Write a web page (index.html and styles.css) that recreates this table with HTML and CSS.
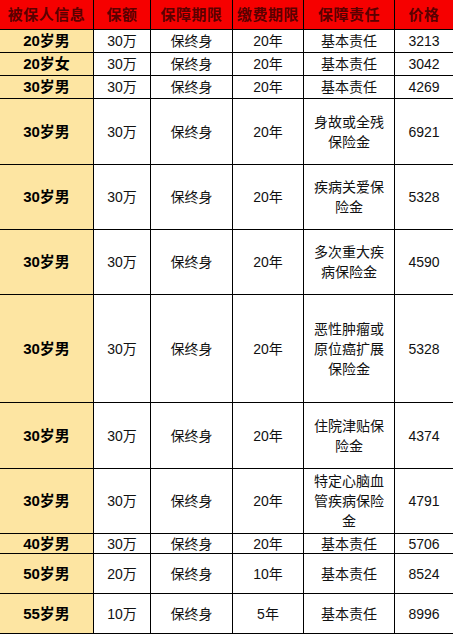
FILE: index.html
```html
<!DOCTYPE html>
<html lang="zh-CN">
<head>
<meta charset="utf-8">
<title>保险价格表</title>
<link rel="stylesheet" href="styles.css">
</head>
<body>
<div class="table">
  <div class="cell head">被保人信息</div>
  <div class="cell head">保额</div>
  <div class="cell head">保障期限</div>
  <div class="cell head">缴费期限</div>
  <div class="cell head">保障责任</div>
  <div class="cell head">价格</div>

  <div class="cell who">20岁男</div><div class="cell">30万</div><div class="cell">保终身</div><div class="cell">20年</div><div class="cell">基本责任</div><div class="cell">3213</div>
  <div class="cell who">20岁女</div><div class="cell">30万</div><div class="cell">保终身</div><div class="cell">20年</div><div class="cell">基本责任</div><div class="cell">3042</div>
  <div class="cell who">30岁男</div><div class="cell">30万</div><div class="cell">保终身</div><div class="cell">20年</div><div class="cell">基本责任</div><div class="cell">4269</div>
  <div class="cell who">30岁男</div><div class="cell">30万</div><div class="cell">保终身</div><div class="cell">20年</div><div class="cell multi">身故或全残<br>保险金</div><div class="cell">6921</div>
  <div class="cell who">30岁男</div><div class="cell">30万</div><div class="cell">保终身</div><div class="cell">20年</div><div class="cell multi">疾病关爱保<br>险金</div><div class="cell">5328</div>
  <div class="cell who">30岁男</div><div class="cell">30万</div><div class="cell">保终身</div><div class="cell">20年</div><div class="cell multi">多次重大疾<br>病保险金</div><div class="cell">4590</div>
  <div class="cell who">30岁男</div><div class="cell">30万</div><div class="cell">保终身</div><div class="cell">20年</div><div class="cell multi">恶性肿瘤或<br>原位癌扩展<br>保险金</div><div class="cell">5328</div>
  <div class="cell who">30岁男</div><div class="cell">30万</div><div class="cell">保终身</div><div class="cell">20年</div><div class="cell multi">住院津贴保<br>险金</div><div class="cell">4374</div>
  <div class="cell who">30岁男</div><div class="cell">30万</div><div class="cell">保终身</div><div class="cell">20年</div><div class="cell multi">特定心脑血<br>管疾病保险<br>金</div><div class="cell">4791</div>
  <div class="cell who">40岁男</div><div class="cell">30万</div><div class="cell">保终身</div><div class="cell">20年</div><div class="cell">基本责任</div><div class="cell">5706</div>
  <div class="cell who">50岁男</div><div class="cell">20万</div><div class="cell">保终身</div><div class="cell">10年</div><div class="cell">基本责任</div><div class="cell">8524</div>
  <div class="cell who">55岁男</div><div class="cell">10万</div><div class="cell">保终身</div><div class="cell">5年</div><div class="cell">基本责任</div><div class="cell">8996</div>
</div>
</body>
</html>
```

FILE: styles.css
```css
html, body {
  margin: 0;
  padding: 0;
  background: #ffffff;
  overflow: hidden;
}

.table {
  display: grid;
  width: 453px;
  grid-template-columns: 93px 56px 81px 70px 90px 58px;
  grid-template-rows: 29px 22px 22px 22px 65px 64px 64px 107px 65px 64px 19px 39px 39px;
  column-gap: 1px;
  row-gap: 1px;
  background: #000000;
  padding-bottom: 1px;
  font-family: "Liberation Sans", "Noto Sans CJK SC", sans-serif;
  font-size: 14px;
  color: #111111;
}

.cell {
  background: #ffffff;
  display: flex;
  align-items: center;
  justify-content: center;
  text-align: center;
  line-height: 20px;
  white-space: nowrap;
}

.head {
  background: #f60000;
  color: #5a0000;
  font-weight: bold;
  font-size: 15px;
  letter-spacing: 0.5px;
}

.who {
  background: #fde5a2;
  font-weight: bold;
  font-size: 15px;
  color: #000000;
}

.multi {
  line-height: 20px;
}
```
